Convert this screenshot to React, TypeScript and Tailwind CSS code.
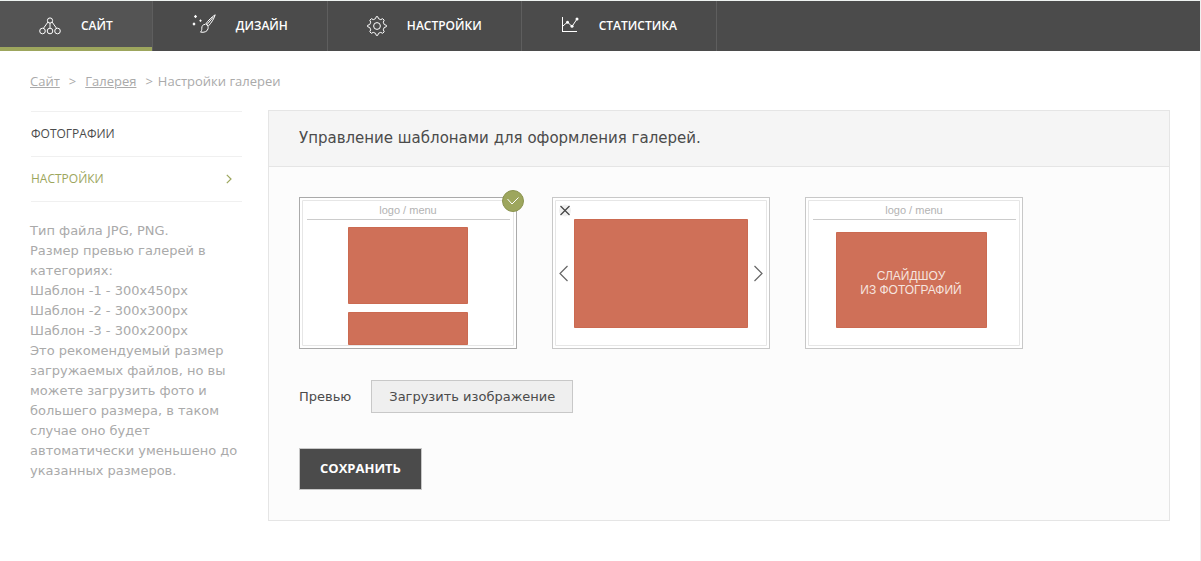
import { useState } from 'react';
import type { ReactNode } from 'react';

import clsx from 'clsx';

const SiteIcon = () => (
  <svg width="22" height="18" viewBox="0 0 22 18" fill="none" stroke="currentColor">
    <circle cx="11" cy="3.5" r="2.6" />
    <circle cx="3.5" cy="14" r="2.8" />
    <circle cx="11" cy="14" r="2.8" />
    <circle cx="18.5" cy="14" r="2.8" />
    <path d="M11 6v5M9 5l-4.5 6.2M13 5l4.5 6.2" />
  </svg>
);

const DesignIcon = () => (
  <svg width="24" height="24" viewBox="0 0 24 24" fill="none" stroke="currentColor">
    <path d="M23.2.8c-3 1.8-7.3 5.8-9.4 9.2l2.4 2.2C19 9.400 22.300 4.400 23.200.8z" />
    <path d="M13.400 10.300c-2.500.1-3.700 1.700-3.600 3.900.1 1.800-.4 2.900-1.300 3.900 3.400.7 6.900-.4 7.500-3.300.2-1 .2-1.700 0-2.500M21.300 3l-6.600 8" />
    <path
      d="M3.500.8l1.600 1.700-1.600 1.700-1.600-1.700zM2 8.300l1.600 1.700L2 11.700.400 10zM8.500 5.300l1.300 1.400-1.300 1.400-1.300-1.400z"
      fill="currentColor"
      stroke="none"
    />
  </svg>
);

const SettingsIcon = () => (
  <svg width="20" height="20" viewBox="0 0 20 20" fill="none" stroke="currentColor" strokeLinejoin="round">
    <path d="M8.500 2.700L9.300.6h1.400l.8 2.100 2.200.9 2-.9 1.500 1.500-.9 2 .9 2.300 2.200.8v1.400l-2.200.8-.9 2.300.9 2-1.500 1.500-2-.9-2.200.9-.8 2.100H9.300l-.8-2.100-2.200-.9-2 .9-1.500-1.500.9-2-.9-2.300-2.200-.8V9.300l2.200-.8.900-2.300-.9-2 1.500-1.500 2 .9z" />
    <circle cx="10" cy="10" r="3.400" />
  </svg>
);

const StatsIcon = () => (
  <svg width="18" height="18" viewBox="0 0 18 18" fill="none" stroke="currentColor">
    <path d="M1.500 0v15M1 14.500h15" />
    <path d="M2 9l4.500-4 4.500 4.500 5-7.500" />
    <g fill="currentColor" stroke="none">
      <circle cx="6.500" cy="5.300" r="1.500" />
      <circle cx="11" cy="9.300" r="1.500" />
      <circle cx="16" cy="2" r="1.500" />
    </g>
  </svg>
);

const NAV_ITEMS: { label: string; icon: ReactNode; active?: boolean }[] = [
  { label: 'САЙТ', icon: <SiteIcon />, active: true },
  { label: 'ДИЗАЙН', icon: <DesignIcon /> },
  { label: 'НАСТРОЙКИ', icon: <SettingsIcon /> },
  { label: 'СТАТИСТИКА', icon: <StatsIcon /> },
];

const TopNav = () => (
  <nav className="flex h-[51px] border-t border-[#eef3f1] bg-[#4b4b4b] font-['Open_Sans','Noto_Sans',sans-serif]">
    {NAV_ITEMS.map(({ label, icon, active }) => (
      <a
        key={label}
        href="#"
        className={clsx(
          'flex items-center gap-5 border-r border-[#5e5e5e] px-[39px] text-[12px] font-semibold text-white',
          active && 'bg-[#545454] shadow-[inset_0_-4px_0_#9da65d]',
        )}>
        {icon}
        {label}
      </a>
    ))}
  </nav>
);

const Breadcrumbs = () => (
  <div className="flex h-5 items-center text-[13px] text-[#aaa] font-['Open_Sans','Noto_Sans',sans-serif]">
    <a href="#" className="underline">
      Сайт
    </a>
    <span className="mx-[9px]">&gt;</span>
    <a href="#" className="underline">
      Галерея
    </a>
    <span className="mr-[5px] ml-[9px]">&gt;</span>
    <span>Настройки галереи</span>
  </div>
);

const Sidebar = () => (
  <aside className="w-[212px] shrink-0">
    <ul className="mt-px ml-px border-t border-[#f0f0f0] text-[12px] font-['Open_Sans','Noto_Sans',sans-serif]">
      <li className="border-b border-[#f0f0f0]">
        <a href="#" className="flex h-11 items-center text-[#4b4b4b]">
          ФОТОГРАФИИ
        </a>
      </li>
      <li className="border-b border-[#f0f0f0]">
        <a href="#" className="flex h-11 items-center justify-between pr-[10px] text-[#9da65d]">
          НАСТРОЙКИ
          <svg width="6" height="10" viewBox="0 0 6 10" fill="none" stroke="currentColor" strokeWidth="1.200">
            <path d="M.8.800L5 5 .8 9.200" />
          </svg>
        </a>
      </li>
    </ul>

    <p className="mt-[19px] text-[13px] leading-5 text-[#aaa]">
      Тип файла JPG, PNG.
      <br />
      Размер превью галерей в категориях:
      <br />
      Шаблон -1 - 300x450px
      <br />
      Шаблон -2 - 300x300px
      <br />
      Шаблон -3 - 300x200px
      <br />
      Это рекомендуемый размер загружаемых файлов, но вы можете загрузить фото и большего размера, в таком случае оно
      будет автоматически уменьшено до указанных размеров.
    </p>
  </aside>
);

const ThumbHeader = () => (
  <>
    <text x="106" y="14" textAnchor="middle" fontSize="11" fill="#b3b3b3">
      logo / menu
    </text>
    <path d="M5 19.500h203" stroke="#ccc" />
  </>
);

const TEMPLATES: { id: string; name: string; drawing: ReactNode }[] = [
  {
    id: 'list',
    name: 'Шаблон 1',
    drawing: (
      <>
        <ThumbHeader />
        <path d="M46.500 27.500h119v76h-119zM46.500 112.500h119v32h-119z" fill="#cf7058" stroke="#cb6a51" />
      </>
    ),
  },
  {
    id: 'lightbox',
    name: 'Шаблон 2',
    drawing: (
      <>
        <path d="M19.500 19.500h173v108h-173z" fill="#cf7058" stroke="#cb6a51" />
        <circle cx="10" cy="10.500" r="6" fill="#f0f0f0" />
        <path d="M5.500 6l9 9M14.500 6l-9 9" stroke="#444" strokeWidth="1.200" />
        <path d="M12.500 66l-7.500 7.500 7.500 7.500M199.500 66l7.500 7.500-7.500 7.500" fill="none" stroke="#666" strokeWidth="1.200" />
      </>
    ),
  },
  {
    id: 'slideshow',
    name: 'Шаблон 3',
    drawing: (
      <>
        <ThumbHeader />
        <path d="M28.500 32.500h150v95h-150z" fill="#cf7058" stroke="#cb6a51" />
        <g fontSize="12" fill="#f6e4df" textAnchor="middle">
          <text x="103" y="80">
            СЛАЙДШОУ
          </text>
          <text x="103" y="94">
            ИЗ ФОТОГРАФИЙ
          </text>
        </g>
      </>
    ),
  },
];

const TemplatePicker = () => {
  const [selected, setSelected] = useState('list');

  return (
    <div className="flex flex-wrap gap-[35px]">
      {TEMPLATES.map(({ id, name, drawing }) => (
        <label
          key={id}
          className={clsx(
            'relative cursor-pointer border bg-white p-[2px]',
            selected === id ? 'border-[#aaa]' : 'border-[#c8c8c8]',
          )}>
          <input
            type="radio"
            name="template"
            value={id}
            aria-label={name}
            checked={selected === id}
            onChange={() => setSelected(id)}
            className="sr-only"
          />
          <svg
            width="212"
            height="146"
            viewBox="0 0 212 146"
            className="block font-['Liberation_Sans',Arial,sans-serif]">
            <path d="M.5.5h211v145H.500z" fill="#fff" stroke="#e6e6e6" />
            {drawing}
          </svg>
          {selected === id && (
            <span className="absolute -top-2 -right-2 flex size-[22px] items-center justify-center rounded-full border border-[#8b9450] bg-[#9da65d] text-white">
              <svg width="12" height="8" viewBox="0 0 12 8" fill="none" stroke="currentColor">
                <path d="M.5 2l4.500 5L11.500.5" />
              </svg>
            </span>
          )}
        </label>
      ))}
    </div>
  );
};

const GallerySettings = () => (
  <section className="min-w-0 flex-1 border border-[#e5e5e5] bg-[#fcfcfc]">
    <h1 className="flex h-14 items-center border-b border-[#e5e5e5] bg-[#f5f5f5] px-[30px] text-[15px] text-[#4b4b4b]">
      Управление шаблонами для оформления галерей.
    </h1>

    <form className="p-[30px]" onSubmit={(e) => e.preventDefault()}>
      <TemplatePicker />

      <div className="mt-[31px] flex items-center gap-5 text-[13px] text-[#4b4b4b]">
        <label htmlFor="preview">Превью</label>
        <button id="preview" type="button" className="h-[33px] border border-[#c8c8c8] bg-[#efefef] px-[17px]">
          Загрузить изображение
        </button>
      </div>

      <button
        type="submit"
        className="mt-[35px] block h-[42px] border border-[#c8c8c8] bg-[#4b4b4b] px-5 text-[13px] font-bold text-white font-['Open_Sans','Noto_Sans',sans-serif]">
        СОХРАНИТЬ
      </button>
    </form>
  </section>
);

const App = () => (
  <div className="min-h-screen border-r border-[#f0f0f0] bg-white font-[Verdana,'DejaVu_Sans',sans-serif]">
    <TopNav />
    <main className="px-[30px] pt-[21px] pb-10">
      <Breadcrumbs />
      <div className="mt-[18px] flex items-start gap-[26px]">
        <Sidebar />
        <GallerySettings />
      </div>
    </main>
  </div>
);

export default App;
